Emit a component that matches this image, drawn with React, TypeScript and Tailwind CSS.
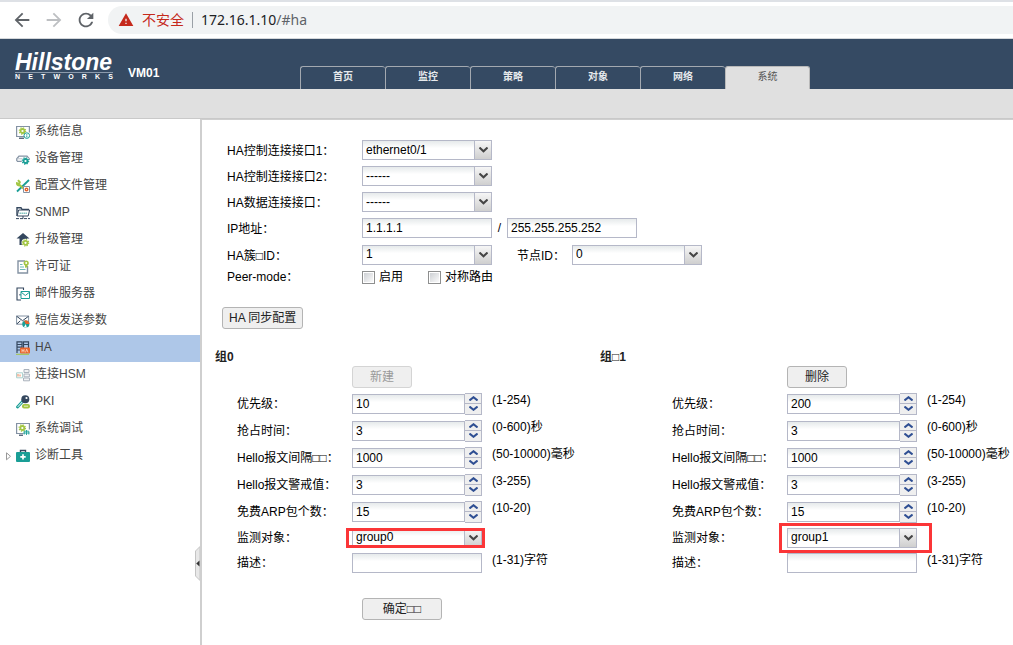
import { useState } from 'react';
import type { ReactNode } from 'react';
import { MdArrowBack, MdArrowForward, MdRefresh, MdWarning } from 'react-icons/md';

const NAVY = '#34475e';
const TEAL = '#1a9e96';
const LIME = '#a3c644';
const STEEL = '#8492a3';
const ORANGE = '#e8642c';

function Gear({ cx, cy, color }: { cx: number; cy: number; color: string }) {
  return (
    <g fill="none" stroke={color}>
      <circle cx={cx} cy={cy} r="2" strokeWidth="1.8" />
      <circle cx={cx} cy={cy} r="3.2" strokeWidth="1.2" strokeDasharray="1.3 1.2" />
    </g>
  );
}

const icons: Record<string, ReactNode> = {
  info: (
    <>
      <path d="M9 11.5H.6V1.5h12.8v6" fill="none" stroke={STEEL} strokeWidth="1.2" />
      <path d="M3 13.2h5" stroke={NAVY} strokeWidth="1.2" />
      <Gear cx={6.5} cy={6} color={LIME} />
      <circle cx="10.8" cy="10.6" r="2.8" fill="#fff" stroke={TEAL} />
      <path d="M10.8 8.9v.9m0 .6v2" stroke={TEAL} />
    </>
  ),
  device: (
    <>
      <path d="M.8 9V6.8L3 4.2h8l2.2 2.6V8M.8 9.4h6" fill="none" stroke={STEEL} strokeWidth="1.3" />
      <path d="M1 6.8h12" stroke="#b8c1cb" />
      <circle cx="9.5" cy="9" r="3.8" fill="#fff" />
      <Gear cx={9.5} cy={9} color={TEAL} />
    </>
  ),
  config: (
    <>
      <path d="M13 1L1 12.5" stroke={TEAL} strokeWidth="1.8" />
      <path d="M2 1.2l1.8 2L3 4.8.8 4.2c.4 2 1.8 2.8 3.4 2.2l4 4" fill="none" stroke={LIME} strokeWidth="2" />
      <path d="M7.5 7.5h6v6h-6z" fill="#fff" stroke={STEEL} />
      <circle cx="10.5" cy="10.5" r="1.3" fill="none" stroke={ORANGE} strokeWidth="1.4" />
    </>
  ),
  snmp: (
    <>
      <path d="M1 10V1.8h4l1 1.6h7" fill="none" stroke={NAVY} strokeWidth="1.4" />
      <path d="M1.2 10L2.6 4h11l-1.4 6z" fill="#fff" stroke={NAVY} />
      <path d="M3.5 7.2h7.8" stroke="#77bdb9" strokeWidth="1.6" strokeDasharray="1.4 .6" />
      <path d="M7 10v2.5M0 12.6h14" stroke={NAVY} strokeDasharray="3 1" />
    </>
  ),
  upgrade: (
    <>
      <path d="M7 0l6.5 5.5H11V12H3.5V5.5H.5z" fill={NAVY} />
      <circle cx="9.5" cy="9.8" r="4" fill="#fff" />
      <Gear cx={9.5} cy={9.8} color={LIME} />
    </>
  ),
  license: (
    <>
      <path d="M9 1H2v12h9.5V6" fill="none" stroke={STEEL} strokeWidth="1.4" />
      <path d="M4 4.5h2.5M4 7h4M4 9.5h5.5" stroke="#6bb9b4" />
      <circle cx="10.2" cy="3" r="1.8" fill="#fff" stroke={LIME} strokeWidth="1.6" />
      <path d="M9 5v3l1.2-.8 1.2.8V5" fill={LIME} />
    </>
  ),
  mail: (
    <>
      <path d="M5 13H1V1h6.5v2M4 7v1.5" fill="none" stroke={NAVY} strokeWidth="1.1" />
      <path d="M5 4.5h8.5v7H5z" fill="#fff" stroke={TEAL} />
      <path d="M5.2 5.2l4.1 3.3 4.2-3.3" fill="none" stroke={TEAL} />
    </>
  ),
  sms: (
    <>
      <path d="M.6 2h12v8.2H.6z" fill="#fff" stroke={STEEL} />
      <path d="M.6 2.2l6 4.5 6-4.5M.8 10l3.5-3.2" fill="none" stroke={NAVY} />
      <circle cx="9.8" cy="10" r="3.6" fill={TEAL} />
      <path d="M9.8 10L8 6.8a3.6 3.6 0 0 1 5.4 3.2z" fill={ORANGE} />
      <path d="M9.8 10l1 3.5L8 13z" fill="#fff" />
    </>
  ),
  ha: (
    <>
      <path d="M1 12V.8h5V12M7.5 7V.8h5V7M1 3.5h5M1 6.2h5M7.5 3.5h5M1 9h3" fill="none" stroke={NAVY} strokeWidth="1.2" />
      <rect x="4" y="6.6" width="10" height="6" rx="1" fill={ORANGE} />
      <path d="M6 8v3.4m2-3.4v3.4M6 9.7h2M9.5 11.4l1.2-3.2 1.3 3.2" fill="none" stroke="#ffd9c6" strokeWidth=".8" />
      <path d="M0 13.3h13" stroke={LIME} />
    </>
  ),
  hsm: (
    <>
      <path d="M.6 4.8h6v5h-6z" fill="#fff" stroke="#a9cfcc" />
      <path d="M2 8.5V6m2 .5v2" stroke={ORANGE} strokeWidth=".8" />
      <path d="M8 1.5h5v3H8zM8 6h5.4v2.8H8zM7.5 10h6v2.8h-6z" fill="#f1f2f4" stroke="#aab2bc" />
    </>
  ),
  pki: (
    <>
      <path d="M7 6L1.5 12" stroke={TEAL} strokeWidth="2.8" strokeLinecap="round" />
      <path d="M6.8 6.4L2 11.6" stroke="#fff" strokeLinecap="round" />
      <circle cx="9.3" cy="4.2" r="4" fill={NAVY} />
      <circle cx="10.5" cy="3" r="1.1" fill="#fff" />
      <rect x="6" y="9" width="8" height="4.4" rx="2" fill={LIME} />
      <path d="M8 11.2h4" stroke="#e6f0c3" />
    </>
  ),
  debug: (
    <>
      <path d="M7.5 11.5H.6V1.5h12.8v6" fill="none" stroke={STEEL} strokeWidth="1.2" />
      <path d="M3 13.2h4" stroke={NAVY} strokeWidth="1.2" />
      <Gear cx={6.3} cy={6} color={LIME} />
      <path d="M8.2 12.5V9.2h4.6v3.3M10.5 8v5M7.5 11h6" fill="none" stroke={TEAL} strokeWidth=".9" />
    </>
  ),
  tools: (
    <>
      <path d="M4.5 3.5V1.5h5v2" fill="none" stroke={NAVY} strokeWidth="1.4" />
      <rect x="0" y="3" width="14" height="10" rx="1" fill={TEAL} />
      <path d="M7 5.2v5.4M4.3 7.9h5.4" stroke="#fff" strokeWidth="1.7" />
    </>
  ),
};

const tabs = ['首页', '监控', '策略', '对象', '网络', '系统'];

const menu = [
  { icon: 'info', label: '系统信息' },
  { icon: 'device', label: '设备管理' },
  { icon: 'config', label: '配置文件管理' },
  { icon: 'snmp', label: 'SNMP' },
  { icon: 'upgrade', label: '升级管理' },
  { icon: 'license', label: '许可证' },
  { icon: 'mail', label: '邮件服务器' },
  { icon: 'sms', label: '短信发送参数' },
  { icon: 'ha', label: 'HA' },
  { icon: 'hsm', label: '连接HSM' },
  { icon: 'pki', label: 'PKI' },
  { icon: 'debug', label: '系统调试' },
  { icon: 'tools', label: '诊断工具', expandable: true },
];

const inputClass =
  'h-5 border border-[#b5b8c8] bg-linear-to-b from-[#e6eaeb] to-white to-40% px-[3px] text-[12px] leading-4 text-black focus:outline-none focus:border-[#7eadd9]';

function TextField({ id, value, label }: { id: string; value: string; label?: string }) {
  return <input id={id} type="text" aria-label={label} defaultValue={value} className={`${inputClass} w-[130px]`} />;
}

function Combo({ id, value }: { id: string; value: string }) {
  return (
    <div className="relative w-[130px]">
      <select id={id} defaultValue={value} className={`${inputClass} block w-full appearance-none pb-px`}>
        <option>{value}</option>
      </select>
      <span className="pointer-events-none absolute top-0 right-0 flex h-5 w-[18px] items-center justify-center border border-[#b5b8c8] bg-linear-to-b from-[#f6f6f6] to-[#cfcfcf]">
        <svg width="9" height="6" viewBox="0 0 9 6">
          <path d="M.5.5l4 3.8 4-3.8" fill="none" stroke="#444" strokeWidth="2" />
        </svg>
      </span>
    </div>
  );
}

function Spinner({ id, value }: { id: string; value: string }) {
  const [current, setCurrent] = useState(value);
  const step = (delta: number) => setCurrent(String(Number(current) + delta));
  const stepClass = 'flex h-[11px] w-[17px] items-center justify-center border border-l-0 border-[#b5b8c8] bg-[#efefef]';

  return (
    <div className="flex w-[130px] items-center">
      <input
        id={id}
        type="text"
        value={current}
        onChange={(e) => setCurrent(e.target.value)}
        className={`${inputClass} w-[113px]`}
      />
      <div className="flex flex-col">
        <button type="button" aria-label="+" onClick={() => step(1)} className={stepClass}>
          <svg width="9" height="5" viewBox="0 0 9 5">
            <path d="M.5 4.5l4-3.3 4 3.3" fill="none" stroke="#2f4f93" strokeWidth="2" />
          </svg>
        </button>
        <button type="button" aria-label="-" onClick={() => step(-1)} className={`${stepClass} border-t-0`}>
          <svg width="9" height="5" viewBox="0 0 9 5">
            <path d="M.5.5l4 3.3 4-3.3" fill="none" stroke="#2f4f93" strokeWidth="2" />
          </svg>
        </button>
      </div>
    </div>
  );
}

function Button({ children, className, disabled }: { children: ReactNode; className?: string; disabled?: boolean }) {
  return (
    <button
      type="button"
      disabled={disabled}
      className={`h-[22px] rounded-[3px] border border-[#b4b4b4] bg-[#efefef] text-[12px] leading-5 text-[#222] disabled:border-[#d4d4d4] disabled:text-[#999] ${className ?? ''}`}
    >
      {children}
    </button>
  );
}

function Checkbox({ label }: { label: string }) {
  return (
    <label className="flex items-center gap-1">
      <input
        type="checkbox"
        className="size-[13px] appearance-none border border-[#8e8f8f] bg-linear-to-br from-[#c9ccd0] to-white ring-1 ring-white ring-inset checked:bg-[#34475e]"
      />
      {label}
    </label>
  );
}

function FormRow({ id, label, className, children }: { id: string; label: string; className?: string; children: ReactNode }) {
  return (
    <div className={`flex items-center ${className ?? 'h-[26px]'}`}>
      <label htmlFor={id} className="w-[135px] shrink-0 pt-0.5">
        {label}
      </label>
      {children}
    </div>
  );
}

interface GroupProps {
  id: string;
  title: string;
  action: string;
  actionDisabled?: boolean;
  priority: string;
  monitor: string;
  indent: string;
  markClass: string;
}

function Group({ id, title, action, actionDisabled, priority, monitor, indent, markClass }: GroupProps) {
  const fields = [
    { key: 'priority', label: '优先级：', value: priority, hint: '(1-254)' },
    { key: 'preempt', label: '抢占时间：', value: '3', hint: '(0-600)秒' },
    { key: 'hello', label: 'Hello报文间隔□□：', value: '1000', hint: '(50-10000)毫秒' },
    { key: 'threshold', label: 'Hello报文警戒值：', value: '3', hint: '(3-255)' },
    { key: 'arp', label: '免费ARP包个数：', value: '15', hint: '(10-20)' },
  ];
  const labelClass = 'w-[115px] shrink-0 pt-px';
  const hintClass = 'ml-[10px] self-start whitespace-nowrap leading-5';

  return (
    <section>
      <h2 className="leading-[18px] font-bold text-[#222]">{title}</h2>
      <div className={indent}>
        <div className="flex h-6 items-start pl-[115px]">
          <Button className="w-[60px]" disabled={actionDisabled}>
            {action}
          </Button>
        </div>
        {fields.map((field) => (
          <div key={field.key} className="flex h-[27px] items-center">
            <label htmlFor={`${id}-${field.key}`} className={labelClass}>
              {field.label}
            </label>
            <Spinner id={`${id}-${field.key}`} value={field.value} />
            <span className={hintClass}>{field.hint}</span>
          </div>
        ))}
        <div className="flex h-[25px] items-center">
          <label htmlFor={`${id}-monitor`} className={labelClass}>
            监测对象：
          </label>
          <div className="relative">
            <Combo id={`${id}-monitor`} value={monitor} />
            <span className={`pointer-events-none absolute border-3 border-[#fb3537] ${markClass}`} />
          </div>
        </div>
        <div className="flex h-[25px] items-center">
          <label htmlFor={`${id}-desc`} className={labelClass}>
            描述：
          </label>
          <TextField id={`${id}-desc`} value="" />
          <span className={hintClass}>(1-31)字符</span>
        </div>
      </div>
    </section>
  );
}

function BrowserBar() {
  return (
    <div className="flex h-[39px] shrink-0 items-center border-t-2 border-b border-t-[#dee1e6] border-b-[#d5d8db] bg-white pl-[11px] text-[#5f6368]">
      <button type="button" aria-label="后退">
        <MdArrowBack size={22} />
      </button>
      <button type="button" aria-label="前进" className="ml-[10px] text-[#bdbfc2]" disabled>
        <MdArrowForward size={22} />
      </button>
      <button type="button" aria-label="刷新" className="ml-[10px]">
        <MdRefresh size={22} />
      </button>
      <div className="ml-[11px] flex h-7 flex-1 items-center rounded-l-full bg-[#f1f3f4] pl-[10px] font-['Noto_Sans','Noto_Sans_CJK_SC',sans-serif] text-[14px] leading-5">
        <MdWarning size={16} className="text-[#c5291c]" />
        <span className="ml-2 text-[#c5291c]">不安全</span>
        <span className="mx-2 h-4 w-px bg-[#9aa0a6]" />
        <span className="text-[#202124]">
          172.16.1.10<span className="text-[#5f6368]">/#ha</span>
        </span>
      </div>
    </div>
  );
}

function Logo() {
  return (
    <div className="w-[98px] text-white">
      <div className="border-b border-[#8b9aac] text-[23px] leading-[19px] font-bold italic">Hillstone</div>
      <div className="flex justify-between text-[7px] leading-[7px] font-bold">
        {'NETWORKS'.split('').map((letter, i) => (
          <span key={i}>{letter}</span>
        ))}
      </div>
    </div>
  );
}

function Header() {
  const [active, setActive] = useState('系统');

  return (
    <header className="flex h-[50px] shrink-0 items-end bg-[#354a63]">
      <div className="flex w-[300px] shrink-0 items-end gap-[15px] pb-[9px] pl-[15px]">
        <Logo />
        <span className="leading-[14px] font-bold text-white">VM01</span>
      </div>
      <nav className="flex">
        {tabs.map((tab) => (
          <button
            key={tab}
            type="button"
            onClick={() => setActive(tab)}
            className={`h-[23px] w-[85px] rounded-t-[3px] border-t border-l pb-0.5 text-[10px] leading-5 ${
              active === tab
                ? 'border-r border-[#b9b9b9] bg-[#e0e0e0] text-[#555]'
                : 'border-[#a3a9b0] font-bold text-[#e6e9ec]'
            }`}
          >
            {tab}
          </button>
        ))}
      </nav>
    </header>
  );
}

function Sidebar() {
  const [selected, setSelected] = useState('HA');

  return (
    <aside className="relative w-[202px] shrink-0 border-r-2 border-[#cfcfcf]">
      <ul>
        {menu.map((item) => (
          <li key={item.label}>
            <button
              type="button"
              onClick={() => setSelected(item.label)}
              className={`flex h-[27px] w-full items-center pb-[3px] pl-1 text-left leading-5 text-[#444] ${
                selected === item.label ? 'bg-[#aec7e8]' : ''
              }`}
            >
              <span className="flex w-3 pt-0.5">
                {item.expandable && (
                  <svg width="8" height="9" viewBox="0 0 8 9">
                    <path d="M2.5.8v7l4-3.5z" fill="#fff" stroke="#999" />
                  </svg>
                )}
              </span>
              <svg width="14" height="14" viewBox="0 0 14 14" className="mt-px mr-[5px]">
                {icons[item.icon]}
              </svg>
              {item.label}
            </button>
          </li>
        ))}
      </ul>
      <button type="button" aria-label="收起" className="absolute top-[427px] right-0">
        <svg width="5" height="35" viewBox="0 0 5 35">
          <path d="M5 .5L.5 5v25L5 34.5z" fill="#e8e8e8" stroke="#c4c4c4" />
          <path d="M4.5 14.5v6L1.2 17.5z" fill="#333" />
        </svg>
      </button>
    </aside>
  );
}

export default function App() {
  return (
    <div className="flex min-h-screen flex-col overflow-hidden bg-white font-['Liberation_Sans','Noto_Sans_CJK_SC',sans-serif] text-[12px] leading-4 text-black">
      <BrowserBar />
      <Header />
      <div className="h-[30px] shrink-0 border-b border-[#c9c9c9] bg-[#e0e0e0]" />
      <div className="flex flex-1">
        <Sidebar />
        <main className="min-w-0 flex-1 border-t border-[#cfcfcf] pt-[17px]">
          <form onSubmit={(e) => e.preventDefault()}>
            <div className="pl-[25px]">
              <FormRow id="ctrl1" label="HA控制连接接口1：">
                <Combo id="ctrl1" value="ethernet0/1" />
              </FormRow>
              <FormRow id="ctrl2" label="HA控制连接接口2：">
                <Combo id="ctrl2" value="------" />
              </FormRow>
              <FormRow id="data" label="HA数据连接接口：">
                <Combo id="data" value="------" />
              </FormRow>
              <FormRow id="ip" label="IP地址：">
                <TextField id="ip" value="1.1.1.1" />
                <span className="w-[15px] text-center">/</span>
                <TextField id="mask" label="子网掩码" value="255.255.255.252" />
              </FormRow>
              <FormRow id="cluster" label="HA簇□ID：" className="h-[27px]">
                <Combo id="cluster" value="1" />
                <label htmlFor="node" className="ml-[25px] w-[55px] pt-0.5">
                  节点ID：
                </label>
                <Combo id="node" value="0" />
              </FormRow>
              <div className="flex h-[18px] items-center">
                <span className="w-[135px]">Peer-mode：</span>
                <div className="flex gap-[25px]">
                  <Checkbox label="启用" />
                  <Checkbox label="对称路由" />
                </div>
              </div>
            </div>

            <div className="mt-[21px] pl-5">
              <Button className="px-[6px]">HA 同步配置</Button>
            </div>

            <div className="mt-[19px] grid grid-cols-[385px_1fr] pl-[13px]">
              <Group
                id="g0"
                title="组0"
                action="新建"
                actionDisabled
                priority="10"
                monitor="group0"
                indent="pl-[22px]"
                markClass="inset-y-0 -left-[6px] -right-[3px]"
              />
              <Group
                id="g1"
                title="组□1"
                action="删除"
                priority="200"
                monitor="group1"
                indent="pl-[72px]"
                markClass="-inset-y-[5px] -left-2 -right-[15px]"
              />
            </div>

            <div className="mt-[23px] pl-[160px]">
              <Button className="w-20">确定□□</Button>
            </div>
          </form>
        </main>
      </div>
    </div>
  );
}
